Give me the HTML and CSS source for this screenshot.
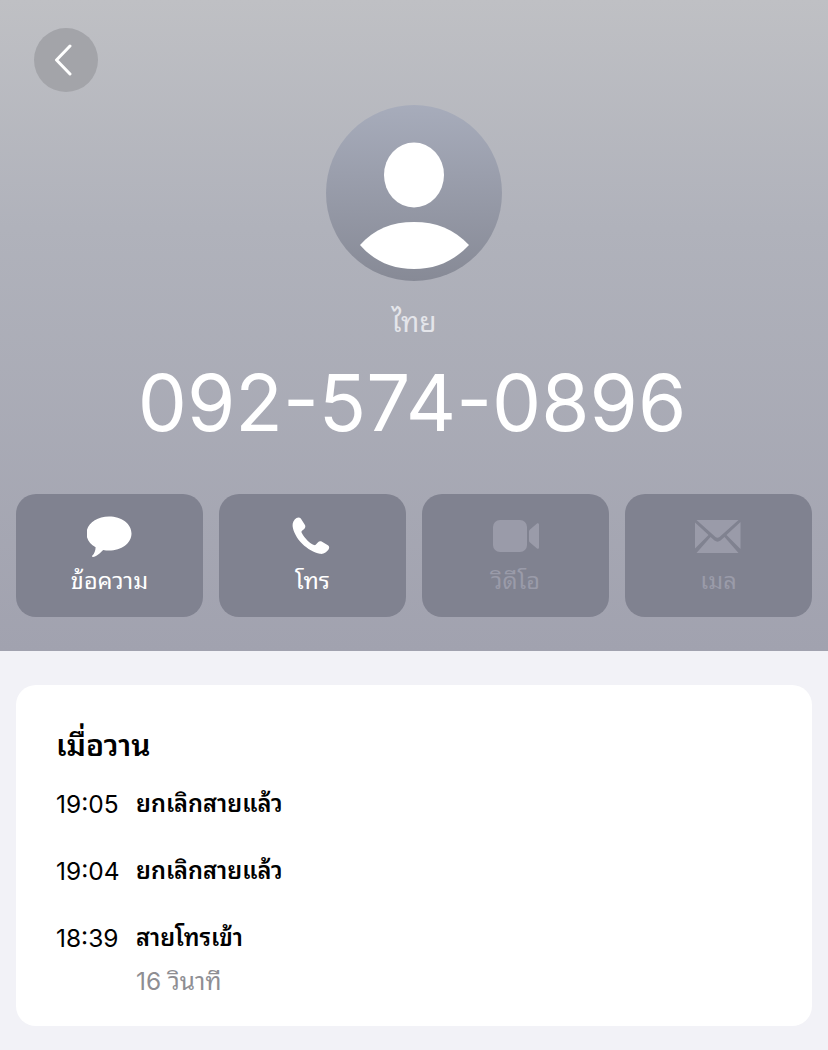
FILE: index.html
```html
<!DOCTYPE html>
<html lang="th">
<head>
    <meta charset="UTF-8">
    <meta name="viewport" content="width=device-width, initial-scale=1.0">
    <title>092-574-0896</title>
    <link rel="stylesheet" href="styles.css">
</head>

<body>

    <!-- Contact Header -->
    <header class="contact-header">
        <div class="back-row">
            <button class="back-button" type="button" aria-label="Back">
                <svg width="20" height="32" viewBox="0 0 20 32"><path d="M17 2 L3.5 16 L17 30" fill="none" stroke="#fff" stroke-width="3" stroke-linecap="round" stroke-linejoin="round"/></svg>
            </button>
        </div>

        <div class="avatar">
            <svg width="176" height="176" viewBox="0 0 176 176">
                <ellipse cx="88" cy="70" rx="30" ry="32.5" fill="#fff"/>
                <path d="M34 140 C48 124 66 117 88 117 C110 117 128 124 143 140 C128 156 110 164 88 164 C66 164 48 156 34 140 Z" fill="#fff"/>
            </svg>
        </div>

        <div class="country">ไทย</div>
        <h1 class="phone-number">092-574-0896</h1>

        <div class="actions">
            <div class="action">
                <svg width="46" height="42" viewBox="1 0 46 42"><path d="M23 0.5 C35.5 0.5 45.5 7.8 45.5 17.5 C45.5 27.2 35.5 34.5 23 34.5 C21 34.5 19 34.3 17.2 33.9 C14.5 36.8 10 40.5 7 41 C6 41.1 5.8 40.2 6.4 39.6 C8.4 37.5 9.6 34.4 9.6 31.2 C4 28 0.5 23.2 0.5 17.5 C0.5 7.8 10.5 0.5 23 0.5 Z" fill="#fff"/></svg>
                <span class="action-label">ข้อความ</span>
            </div>
            <div class="action">
                <svg width="46" height="42" viewBox="2 0 46 42"><path d="M8.5 2 C10 1 11.8 1.2 12.8 2.6 L16.8 8.8 C17.7 10.2 17.4 11.8 16.2 12.9 L14 14.8 C13.4 15.4 13.3 16 13.7 16.8 C15 19.4 17.1 22.2 19.4 24.4 C21.6 26.5 23.6 28 26 29 C26.8 29.3 27.4 29.1 27.9 28.5 L29.8 26.4 C31 25.2 32.6 25 34 25.8 L39.9 29.3 C41.3 30.2 41.6 31.8 40.7 33.2 C38.8 36.2 35.6 38.4 32 37.8 C26 36.8 19.5 33 14.2 27.8 C9 22.6 5.2 15.8 4.6 10 C4.3 6.8 5.8 3.8 8.5 2 Z" fill="#fff"/></svg>
                <span class="action-label">โทร</span>
            </div>
            <div class="action disabled">
                <svg width="46" height="42" viewBox="0 0 46 42"><rect x="0" y="4" width="34" height="32" rx="7" fill="#9a9ba9"/><path d="M37 13.5 L44 7.5 C45 6.8 46 7.5 46 8.6 L46 31.4 C46 32.5 45 33.2 44 32.5 L37 26.5 C36.4 26 36 25.2 36 24.4 L36 15.6 C36 14.8 36.4 14 37 13.5 Z" fill="#9a9ba9"/></svg>
                <span class="action-label">วิดีโอ</span>
            </div>
            <div class="action disabled">
                <svg width="48" height="42" viewBox="1.5 -1 48 42"><path d="M3 3 L45 3 L26 20 C24.8 21 23.2 21 22 20 Z M1 5 L15 18 L1 32 Z M47 5 L33 18 L47 32 Z M3 36 L17 20 L21 23.5 C23 25 25 25 27 23.5 L31 20 L45 36 Z" fill="#9a9ba9"/></svg>
                <span class="action-label">เมล</span>
            </div>
        </div>
    </header>

    <!-- Call History -->
    <main class="history">
        <section class="history-card">
            <h2 class="history-date">เมื่อวาน</h2>
            <div class="call-row">
                <span class="call-time">19:05</span>
                <span class="call-status">ยกเลิกสายแล้ว</span>
            </div>
            <div class="call-row">
                <span class="call-time">19:04</span>
                <span class="call-status">ยกเลิกสายแล้ว</span>
            </div>
            <div class="call-row last">
                <span class="call-time">18:39</span>
                <div>
                    <div class="call-status">สายโทรเข้า</div>
                    <div class="call-length">16 วินาที</div>
                </div>
            </div>
        </section>
    </main>

</body>
</html>
```

FILE: styles.css
```css
/* Global Styles */
* {
    margin: 0;
    padding: 0;
    box-sizing: border-box;
}

body {
    font-family: 'Inter', 'Noto Sans Thai Looped', 'Loma', 'Garuda', 'Waree', 'Noto Sans', 'Liberation Sans', sans-serif;
    background-color: #F2F2F7;
    color: #000;
    width: 828px;
    height: 1050px;
    overflow: hidden;
}

/* Contact Header */
.contact-header {
    height: 651px;
    padding: 28px 16px 0;
    background: linear-gradient(180deg, #BFC0C4 0%, #B0B2BB 35%, #A1A2AF 100%);
}

.back-row {
    height: 64px;
    padding-left: 18px;
}

.back-button {
    width: 64px;
    height: 64px;
    border: none;
    border-radius: 50%;
    background: #A3A4A9;
    display: flex;
    align-items: center;
    justify-content: center;
    padding-right: 6px;
}

.avatar {
    width: 176px;
    height: 176px;
    margin: 13px auto 0;
    border-radius: 50%;
    background: linear-gradient(180deg, #A7ACBB 0%, #878A96 100%);
}

.avatar svg {
    display: block;
}

.country {
    margin-top: 22px;
    height: 38px;
    line-height: 38px;
    font-size: 28px;
    text-align: center;
    color: #E4E5EA;
}

.phone-number {
    margin-top: 17px;
    padding-right: 4px;
    height: 90px;
    line-height: 90px;
    font-size: 78px;
    font-weight: 400;
    text-align: center;
    color: #fff;
    white-space: nowrap;
}

/* Action buttons */
.actions {
    margin-top: 46px;
    display: flex;
    gap: 16px;
}

.action {
    flex: 1;
    height: 123px;
    padding-top: 22px;
    border-radius: 20px;
    background: #808290;
    display: flex;
    flex-direction: column;
    align-items: center;
    color: #fff;
}

.action.disabled {
    color: #9A9BA9;
}

.action-label {
    margin-top: 8px;
    font-size: 23.5px;
    line-height: 30px;
}

/* Call History */
.history {
    padding: 34px 16px 0;
}

.history-card {
    height: 341px;
    padding: 40px 40px 0;
    background: #fff;
    border-radius: 20px;
}

.history-date {
    font-size: 30px;
    line-height: 40px;
    font-weight: 600;
}

.call-row {
    display: flex;
    gap: 17px;
    height: 67px;
    padding-top: 22px;
    font-size: 24.5px;
    line-height: 34px;
}

.call-row.last {
    height: auto;
}

.call-time {
    width: 63px;
    white-space: nowrap;
}

.call-status {
    font-size: 23.5px;
    font-weight: 600;
}

.call-length {
    margin-top: 9px;
    color: #8E8E93;
}
```
